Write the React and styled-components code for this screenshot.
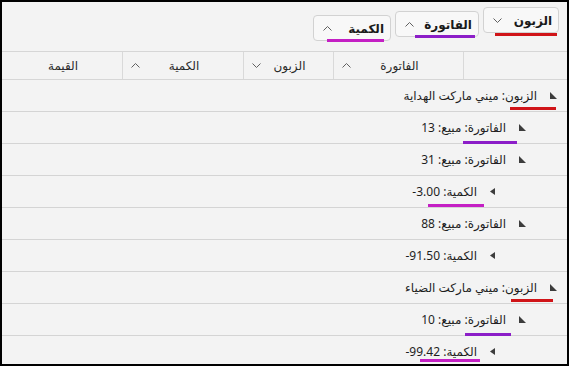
import React from 'react'
import styled, { createGlobalStyle } from 'styled-components'

const groups = [
  { label: 'الزبون', dir: 'down', width: 76, mark: { color: '#d01418', right: 1, width: 62, top: 25 } },
  { label: 'الفاتورة', dir: 'up', width: 84, mark: { color: '#8c1ec8', right: 3, width: 60, top: 23 } },
  { label: 'الكمية', dir: 'up', width: 78, mark: { color: '#c41fc4', right: 6, width: 57, top: 23 } },
]

const columns = [
  { label: '', width: '104px' },
  { label: 'الفاتورة', width: '130px', dir: 'up' },
  { label: 'الزبون', width: '90px', dir: 'down' },
  { label: 'الكمية', width: '121px', dir: 'up' },
  { label: 'القيمة', width: '1fr' },
]

const rows = [
  { level: 0, text: 'الزبون: ميني ماركت الهداية', mark: { color: '#d01418', right: 11, width: 46, top: 27 } },
  { level: 1, text: 'الفاتورة: مبيع: 13', mark: { color: '#8c1ec8', right: 50, width: 54, top: 29 } },
  { level: 1, text: 'الفاتورة: مبيع: 31' },
  { level: 2, text: 'الكمية: 3.00-', mark: { color: '#c41fc4', right: 83, width: 56, top: 28 } },
  { level: 1, text: 'الفاتورة: مبيع: 88' },
  { level: 2, text: 'الكمية: 91.50-' },
  { level: 0, text: 'الزبون: ميني ماركت الضياء', mark: { color: '#d01418', right: 14, width: 42, top: 27 } },
  { level: 1, text: 'الفاتورة: مبيع: 10', mark: { color: '#8c1ec8', right: 56, width: 46, top: 29 } },
  { level: 2, text: 'الكمية: 99.42-', mark: { color: '#c41fc4', right: 87, width: 60, top: 23 } },
]

function Chevron({ dir }) {
  return (
    <svg width="9" height="5" viewBox="0 0 9 5">
      <polyline
        points={dir === 'up' ? '0.5,4.5 4.5,0.5 8.5,4.5' : '0.5,0.5 4.5,4.5 8.5,0.5'}
        fill="none"
        stroke="#606060"
        strokeWidth="1"
      />
    </svg>
  )
}

function Arrow({ open }) {
  return open ? (
    <svg width="7" height="7" viewBox="0 0 7 7">
      <polygon points="0,0 0,7 7,7" fill="#3c3c3c" />
    </svg>
  ) : (
    <svg width="5" height="7" viewBox="0 0 5 7">
      <polygon points="5,0 5,7 0,3.5" fill="#3c3c3c" />
    </svg>
  )
}

function App() {
  return (
    <>
      <GlobalStyle />
      <Frame>
        <GroupPanel>
          {groups.map((g, i) => (
            <Chip key={g.label} level={i} w={g.width}>
              <ChipText>{g.label}</ChipText>
              <Chevron dir={g.dir} />
              <Mark {...g.mark} />
            </Chip>
          ))}
        </GroupPanel>
        <Header cols={columns.map(c => c.width).join(' ')}>
          {columns.map((c, i) => (
            <HeadCell key={i}>
              <span />
              <HeadText>{c.label}</HeadText>
              {c.dir ? <Chevron dir={c.dir} /> : <span />}
            </HeadCell>
          ))}
        </Header>
        {rows.map((r, i) => (
          <Row key={i} level={r.level}>
            <Arrow open={r.level < 2} />
            <RowText>{r.text}</RowText>
            {r.mark && <Mark {...r.mark} />}
          </Row>
        ))}
      </Frame>
    </>
  )
}

export default App

const GlobalStyle = createGlobalStyle`
  body {
    margin: 0;
    font-family: "Noto Sans", "DejaVu Sans", sans-serif;
  }
`

const Frame = styled.div`
  width: 569px;
  height: 366px;
  box-sizing: border-box;
  border: 2px solid #000;
  background: #f3f3f3;
  direction: rtl;
  overflow: hidden;
`

const GroupPanel = styled.div`
  height: 49px;
  box-sizing: border-box;
  display: flex;
  align-items: flex-start;
  gap: 4px;
  padding-right: 8px;
`

const Chip = styled.div`
  position: relative;
  width: ${p => p.w}px;
  margin-top: ${p => 5 + p.level * 4}px;
  height: 26px;
  box-sizing: border-box;
  display: flex;
  align-items: center;
  justify-content: space-between;
  padding: 0 6px 0 9px;
  background: #f8f8f8;
  border: 1px solid #d2d2d2;
  border-radius: 4px;
`

const ChipText = styled.span`
  font-size: 12px;
  font-weight: 700;
  color: #1a1a1a;
`

const Mark = styled.div`
  position: absolute;
  right: ${p => p.right}px;
  top: ${p => p.top}px;
  width: ${p => p.width}px;
  height: 3px;
  background: ${p => p.color};
`

const Header = styled.div`
  display: grid;
  grid-template-columns: ${p => p.cols};
  height: 29px;
  box-sizing: border-box;
  border-top: 1px solid #d6d6d6;
  border-bottom: 1px solid #d6d6d6;
`

const HeadCell = styled.div`
  display: grid;
  grid-template-columns: 22px 1fr 24px;
  align-items: center;
  justify-items: center;
  border-left: 1px solid #d9d9d9;

  &:last-child {
    border-left: none;
  }
`

const HeadText = styled.span`
  font-size: 12px;
  color: #2a2a2a;
`

const Row = styled.div`
  position: relative;
  height: 32px;
  box-sizing: border-box;
  display: flex;
  align-items: center;
  gap: 13px;
  padding-right: ${p => 10 + p.level * 31}px;
  border-bottom: 1px solid #d4d4d4;
`

const RowText = styled.span`
  font-size: 12px;
  color: #1e1e1e;
`
